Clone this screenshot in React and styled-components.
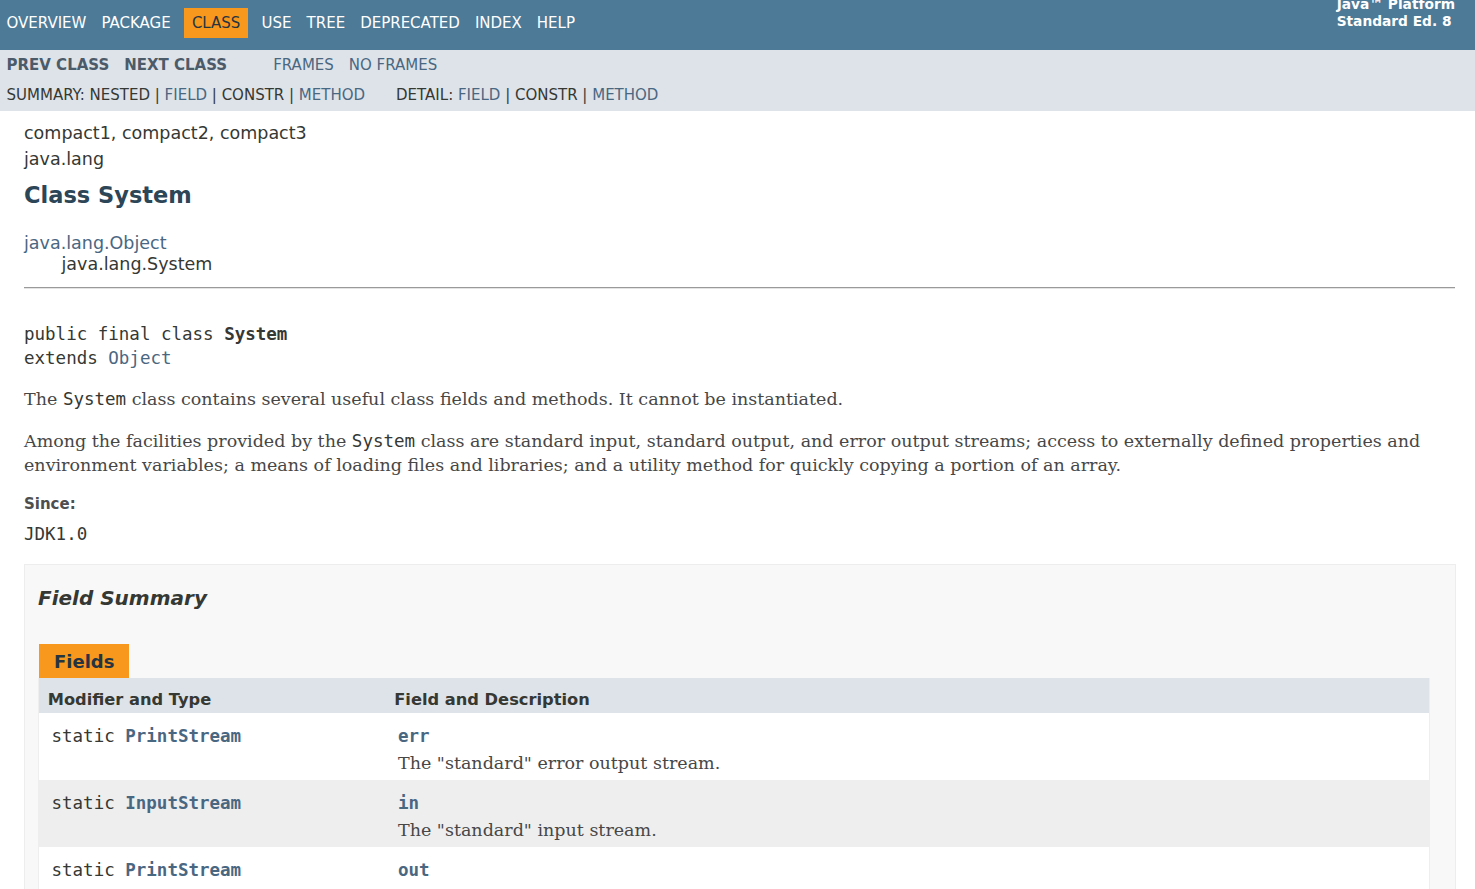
import React from 'react';
import styled, { createGlobalStyle } from 'styled-components';

const LINK = '#4A6782';
const TEXT = '#353833';

const GlobalStyle = createGlobalStyle`
  html, body {
    margin: 0;
    padding: 0;
    background: #fff;
  }
  body {
    color: ${TEXT};
    font-family: 'DejaVu Sans', Arial, Helvetica, sans-serif;
    font-size: 17.5px;
  }
  * { box-sizing: border-box; }
`;

const TopNav = styled.div`
  background: #4d7a97;
  height: 50px;
  display: flex;
  justify-content: space-between;
  align-items: flex-start;
  overflow: hidden;
  font-size: 15px;
`;

const NavList = styled.ul`
  display: flex;
  margin: 0 ${(p) => p.$gap || 0}px 0 ${(p) => p.$left || 0}px;
  padding: ${(p) => p.$top || 0}px 0 0 0;
  list-style: none;
`;

const NavItem = styled.li`
  padding: 0 7.5px;
  height: ${(p) => p.$h || 30}px;
  line-height: ${(p) => p.$h || 30}px;
  text-transform: uppercase;
  white-space: nowrap;
  color: ${(p) => (p.$active ? '#253441' : p.$color || '#fff')};
  background: ${(p) => (p.$active ? '#f8981d' : 'transparent')};
  margin: ${(p) => (p.$active ? '0 6.25px' : '0')};
  font-weight: ${(p) => (p.$bold ? 'bold' : 'normal')};
`;

const AboutLanguage = styled.div`
  color: #fff;
  font-weight: bold;
  font-size: 13.75px;
  line-height: 17px;
  margin-top: -4.5px;
  padding-right: 20px;
  white-space: nowrap;
`;

const SubNav = styled.div`
  background: #dee3e9;
  height: 61px;
  padding-top: 1px;
  font-size: 15px;
`;

const SubRow = styled.div`
  display: flex;
`;

const SubNavLine = styled.div`
  display: flex;
  padding-left: 6.5px;
  height: 28px;
  line-height: 28px;
  text-transform: uppercase;
  margin-top: 2px;
`;

const SubGroup = styled.div`
  margin-right: ${(p) => p.$gap || 0}px;
  white-space: pre;
`;

const Link = styled.span`
  color: ${LINK};
`;

const Plain = styled.span`
  color: ${TEXT};
`;

const Header = styled.div`
  padding: 12px 20px 0 24px;
`;

const SubTitle = styled.div`
  line-height: 20px;
  margin-top: ${(p) => p.$mt || 0}px;
`;

const Title = styled.h2`
  margin: 13px 0 25px;
  font-size: 22.5px;
  line-height: 26px;
  font-weight: bold;
  color: #2c4557;
`;

const Content = styled.div`
  padding: 0 19px 0 24px;
`;

const Inheritance = styled.div`
  line-height: 20px;
`;

const InheritChild = styled.div`
  padding: 1px 0 0 37.5px;
  line-height: 20px;
`;

const Rule = styled.hr`
  margin: 13px 1px 0 0;
  border: 0;
  border-top: 1px solid #9a9a9a;
  border-bottom: 1px solid #e4e4e4;
  height: 0;
`;

const Signature = styled.pre`
  margin: 33px 0 0;
  font-family: 'DejaVu Sans Mono', monospace;
  font-size: 17.5px;
  line-height: 24px;
  color: ${TEXT};
`;

const Bold = styled.b`
  font-weight: bold;
`;

const Block = styled.div`
  font-family: 'DejaVu Serif', Georgia, 'Times New Roman', serif;
  font-size: 17.5px;
  line-height: 24px;
  color: #474747;
  margin-top: ${(p) => p.$mt || 0}px;
`;

const Code = styled.code`
  font-family: 'DejaVu Sans Mono', monospace;
  font-size: 17.5px;
  color: ${TEXT};
`;

const DT = styled.div`
  margin-top: 17px;
  font-size: 15px;
  line-height: 20px;
  font-weight: bold;
  color: #4e4e4e;
`;

const DD = styled.div`
  margin-top: 8px;
  font-family: 'DejaVu Sans Mono', monospace;
  font-size: 17.5px;
  line-height: 24px;
`;

const SummaryBox = styled.div`
  margin-top: 18px;
  border: 1px solid #ededed;
  background: #f8f8f8;
  padding: 0 25px 6px 13px;
  height: 360px;
`;

const SummaryTitle = styled.h3`
  margin: 20px 0 33px;
  font-size: 20px;
  line-height: 26px;
  font-style: italic;
  font-weight: bold;
  color: ${TEXT};
`;

const Caption = styled.div`
  padding-left: 1px;
  display: flex;
`;

const CaptionTab = styled.span`
  display: inline-block;
  background: #f8981d;
  color: #253441;
  font-weight: bold;
  font-size: 18px;
  height: 34px;
  line-height: 35px;
  padding: 0 15px;
`;

const Table = styled.table`
  width: 100%;
  border-collapse: collapse;
  border-left: 1px solid #eee;
  border-right: 1px solid #eee;
  table-layout: fixed;
`;

const TH = styled.th`
  background: #dee3e9;
  text-align: left;
  font-size: 16.25px;
  font-weight: bold;
  line-height: 21px;
  padding: 11px 3.75px 3px 8.75px;
  width: ${(p) => p.$w || 'auto'};
  color: ${TEXT};
`;

const Row = styled.tr`
  background: ${(p) => (p.$alt ? '#eeeeef' : '#fff')};
`;

const TD = styled.td`
  vertical-align: top;
  padding: 11px 0 3px 12.5px;
  white-space: nowrap;
`;

const MemberCode = styled.code`
  display: block;
  font-family: 'DejaVu Sans Mono', monospace;
  font-size: 17.5px;
  line-height: 24px;
  color: ${TEXT};
`;

const MemberLink = styled.span`
  color: ${LINK};
  font-weight: bold;
`;

const MemberDesc = styled.div`
  margin: 3px 0 2px;
  font-family: 'DejaVu Serif', Georgia, 'Times New Roman', serif;
  font-size: 17.5px;
  line-height: 24px;
  color: #474747;
`;

const fields = [
  { type: 'PrintStream', name: 'err', desc: 'The "standard" error output stream.' },
  { type: 'InputStream', name: 'in', desc: 'The "standard" input stream.' },
  { type: 'PrintStream', name: 'out', desc: 'The "standard" output stream.' },
];

const navItems = ['Overview', 'Package', 'Class', 'Use', 'Tree', 'Deprecated', 'Index', 'Help'];

export default function App() {
  return (
    <>
      <GlobalStyle />
      <TopNav>
        <NavList $top={8} $left={-1}>
          {navItems.map((item) => (
            <NavItem key={item} $active={item === 'Class'}>
              {item}
            </NavItem>
          ))}
        </NavList>
        <AboutLanguage>
          Java™ Platform
          <br />
          Standard Ed. 8
        </AboutLanguage>
      </TopNav>
      <SubNav>
        <SubRow>
          <NavList $gap={31} $left={-1}>
            <NavItem $h={28} $bold $color="#4c5b6a">Prev Class</NavItem>
            <NavItem $h={28} $bold $color="#4c5b6a">Next Class</NavItem>
          </NavList>
          <NavList>
            <NavItem $h={28} $color={LINK}>Frames</NavItem>
            <NavItem $h={28} $color={LINK}>No Frames</NavItem>
          </NavList>
        </SubRow>
        <SubNavLine>
          <SubGroup $gap={31}>
            <Plain>Summary: Nested | </Plain>
            <Link>Field</Link>
            <Plain> | Constr | </Plain>
            <Link>Method</Link>
          </SubGroup>
          <SubGroup>
            <Plain>Detail: </Plain>
            <Link>Field</Link>
            <Plain> | Constr | </Plain>
            <Link>Method</Link>
          </SubGroup>
        </SubNavLine>
      </SubNav>

      <Header>
        <SubTitle>compact1, compact2, compact3</SubTitle>
        <SubTitle $mt={6}>java.lang</SubTitle>
        <Title>Class System</Title>
      </Header>

      <Content>
        <Inheritance>
          <Link>java.lang.Object</Link>
          <InheritChild>java.lang.System</InheritChild>
        </Inheritance>
        <Rule />
        <Signature>
          public final class <Bold>System</Bold>
          {'\n'}extends <Link>Object</Link>
        </Signature>
        <Block $mt={17}>
          The <Code>System</Code> class contains several useful class fields and methods. It cannot be instantiated.
        </Block>
        <Block $mt={18}>
          Among the facilities provided by the <Code>System</Code> class are standard input, standard output, and error
          output streams; access to externally defined properties and environment variables; a means of loading files
          and libraries; and a utility method for quickly copying a portion of an array.
        </Block>
        <DT>Since:</DT>
        <DD>JDK1.0</DD>

        <SummaryBox>
          <SummaryTitle>Field Summary</SummaryTitle>
          <Caption>
            <CaptionTab>Fields</CaptionTab>
          </Caption>
          <Table>
            <thead>
              <tr>
                <TH $w="347px">Modifier and Type</TH>
                <TH>Field and Description</TH>
              </tr>
            </thead>
            <tbody>
              {fields.map((f, i) => (
                <Row key={f.name} $alt={i % 2 === 1}>
                  <TD>
                    <MemberCode>
                      static <MemberLink>{f.type}</MemberLink>
                    </MemberCode>
                  </TD>
                  <TD>
                    <MemberCode>
                      <MemberLink>{f.name}</MemberLink>
                    </MemberCode>
                    <MemberDesc>{f.desc}</MemberDesc>
                  </TD>
                </Row>
              ))}
            </tbody>
          </Table>
        </SummaryBox>
      </Content>
    </>
  );
}
